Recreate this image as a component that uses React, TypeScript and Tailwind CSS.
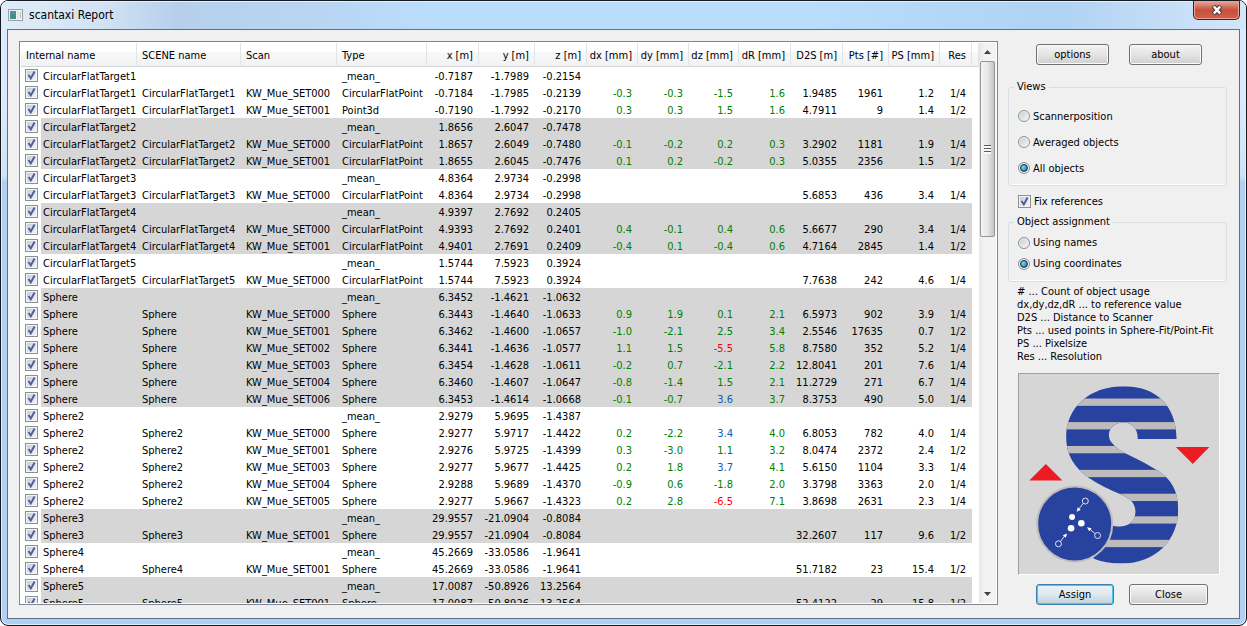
import { useState } from 'react';

type Row = {
    name: string;
    scan?: string;
    type: string;
    pos: [string, string, string];
    diff?: [string, string, string, string];
    info?: [string, string, string, string];
};

const mean = (name: string, x: string, y: string, z: string): Row => ({ name, type: '_mean_', pos: [x, y, z] });

const rows: Row[] = [
    mean('CircularFlatTarget1', '-0.7187', '-1.7989', '-0.2154'),
    { name: 'CircularFlatTarget1', scan: 'KW_Mue_SET000', type: 'CircularFlatPoint', pos: ['-0.7184', '-1.7985', '-0.2139'], diff: ['-0.3', '-0.3', '-1.5', '1.6'], info: ['1.9485', '1961', '1.2', '1/4'] },
    { name: 'CircularFlatTarget1', scan: 'KW_Mue_SET001', type: 'Point3d', pos: ['-0.7190', '-1.7992', '-0.2170'], diff: ['0.3', '0.3', '1.5', '1.6'], info: ['4.7911', '9', '1.4', '1/2'] },
    mean('CircularFlatTarget2', '1.8656', '2.6047', '-0.7478'),
    { name: 'CircularFlatTarget2', scan: 'KW_Mue_SET000', type: 'CircularFlatPoint', pos: ['1.8657', '2.6049', '-0.7480'], diff: ['-0.1', '-0.2', '0.2', '0.3'], info: ['3.2902', '1181', '1.9', '1/4'] },
    { name: 'CircularFlatTarget2', scan: 'KW_Mue_SET001', type: 'CircularFlatPoint', pos: ['1.8655', '2.6045', '-0.7476'], diff: ['0.1', '0.2', '-0.2', '0.3'], info: ['5.0355', '2356', '1.5', '1/2'] },
    mean('CircularFlatTarget3', '4.8364', '2.9734', '-0.2998'),
    { name: 'CircularFlatTarget3', scan: 'KW_Mue_SET000', type: 'CircularFlatPoint', pos: ['4.8364', '2.9734', '-0.2998'], info: ['5.6853', '436', '3.4', '1/4'] },
    mean('CircularFlatTarget4', '4.9397', '2.7692', '0.2405'),
    { name: 'CircularFlatTarget4', scan: 'KW_Mue_SET000', type: 'CircularFlatPoint', pos: ['4.9393', '2.7692', '0.2401'], diff: ['0.4', '-0.1', '0.4', '0.6'], info: ['5.6677', '290', '3.4', '1/4'] },
    { name: 'CircularFlatTarget4', scan: 'KW_Mue_SET001', type: 'CircularFlatPoint', pos: ['4.9401', '2.7691', '0.2409'], diff: ['-0.4', '0.1', '-0.4', '0.6'], info: ['4.7164', '2845', '1.4', '1/2'] },
    mean('CircularFlatTarget5', '1.5744', '7.5923', '0.3924'),
    { name: 'CircularFlatTarget5', scan: 'KW_Mue_SET000', type: 'CircularFlatPoint', pos: ['1.5744', '7.5923', '0.3924'], info: ['7.7638', '242', '4.6', '1/4'] },
    mean('Sphere', '6.3452', '-1.4621', '-1.0632'),
    { name: 'Sphere', scan: 'KW_Mue_SET000', type: 'Sphere', pos: ['6.3443', '-1.4640', '-1.0633'], diff: ['0.9', '1.9', '0.1', '2.1'], info: ['6.5973', '902', '3.9', '1/4'] },
    { name: 'Sphere', scan: 'KW_Mue_SET001', type: 'Sphere', pos: ['6.3462', '-1.4600', '-1.0657'], diff: ['-1.0', '-2.1', '2.5', '3.4'], info: ['2.5546', '17635', '0.7', '1/2'] },
    { name: 'Sphere', scan: 'KW_Mue_SET002', type: 'Sphere', pos: ['6.3441', '-1.4636', '-1.0577'], diff: ['1.1', '1.5', '-5.5', '5.8'], info: ['8.7580', '352', '5.2', '1/4'] },
    { name: 'Sphere', scan: 'KW_Mue_SET003', type: 'Sphere', pos: ['6.3454', '-1.4628', '-1.0611'], diff: ['-0.2', '0.7', '-2.1', '2.2'], info: ['12.8041', '201', '7.6', '1/4'] },
    { name: 'Sphere', scan: 'KW_Mue_SET004', type: 'Sphere', pos: ['6.3460', '-1.4607', '-1.0647'], diff: ['-0.8', '-1.4', '1.5', '2.1'], info: ['11.2729', '271', '6.7', '1/4'] },
    { name: 'Sphere', scan: 'KW_Mue_SET006', type: 'Sphere', pos: ['6.3453', '-1.4614', '-1.0668'], diff: ['-0.1', '-0.7', '3.6', '3.7'], info: ['8.3753', '490', '5.0', '1/4'] },
    mean('Sphere2', '2.9279', '5.9695', '-1.4387'),
    { name: 'Sphere2', scan: 'KW_Mue_SET000', type: 'Sphere', pos: ['2.9277', '5.9717', '-1.4422'], diff: ['0.2', '-2.2', '3.4', '4.0'], info: ['6.8053', '782', '4.0', '1/4'] },
    { name: 'Sphere2', scan: 'KW_Mue_SET001', type: 'Sphere', pos: ['2.9276', '5.9725', '-1.4399'], diff: ['0.3', '-3.0', '1.1', '3.2'], info: ['8.0474', '2372', '2.4', '1/2'] },
    { name: 'Sphere2', scan: 'KW_Mue_SET003', type: 'Sphere', pos: ['2.9277', '5.9677', '-1.4425'], diff: ['0.2', '1.8', '3.7', '4.1'], info: ['5.6150', '1104', '3.3', '1/4'] },
    { name: 'Sphere2', scan: 'KW_Mue_SET004', type: 'Sphere', pos: ['2.9288', '5.9689', '-1.4370'], diff: ['-0.9', '0.6', '-1.8', '2.0'], info: ['3.3798', '3363', '2.0', '1/4'] },
    { name: 'Sphere2', scan: 'KW_Mue_SET005', type: 'Sphere', pos: ['2.9277', '5.9667', '-1.4323'], diff: ['0.2', '2.8', '-6.5', '7.1'], info: ['3.8698', '2631', '2.3', '1/4'] },
    mean('Sphere3', '29.9557', '-21.0904', '-0.8084'),
    { name: 'Sphere3', scan: 'KW_Mue_SET001', type: 'Sphere', pos: ['29.9557', '-21.0904', '-0.8084'], info: ['32.2607', '117', '9.6', '1/2'] },
    mean('Sphere4', '45.2669', '-33.0586', '-1.9641'),
    { name: 'Sphere4', scan: 'KW_Mue_SET001', type: 'Sphere', pos: ['45.2669', '-33.0586', '-1.9641'], info: ['51.7182', '23', '15.4', '1/2'] },
    mean('Sphere5', '17.0087', '-50.8926', '13.2564'),
    { name: 'Sphere5', scan: 'KW_Mue_SET001', type: 'Sphere', pos: ['17.0087', '-50.8926', '13.2564'], info: ['52.4122', '29', '15.8', '1/2'] },
];

// every second object group gets a grey band
const groups = [...new Set(rows.map(r => r.name))];

const numericHeads = ['x [m]', 'y [m]', 'z [m]', 'dx [mm]', 'dy [mm]', 'dz [mm]', 'dR [mm]', 'D2S [m]', 'Pts [#]', 'PS [mm]', 'Res'];

const notes = [
    '# ... Count of object usage',
    'dx,dy,dz,dR ... to reference value',
    'D2S ... Distance to Scanner',
    'Pts ... used points in Sphere-Fit/Point-Fit',
    'PS ... Pixelsize',
    'Res ... Resolution',
];

// dR is informational only, the axis values are flagged
function diffColor(value: string, index: number) {
    const v = Math.abs(parseFloat(value));
    if (index < 3 && v > 5) return 'text-[#ff0000]';
    if (index < 3 && v > 3.2) return 'text-[#0a5cc0]';
    return 'text-[#008000]';
}

function CheckBox({ id, label }: { id?: string; label?: string }) {
    return (
        <span className="relative block w-[13px] h-[13px] flex-none">
            <input
                id={id}
                type="checkbox"
                defaultChecked
                aria-label={label}
                className="peer appearance-none block w-[13px] h-[13px] border border-[#8e8f8f] bg-linear-to-br from-[#c4cad6] to-[#f6f6f6] shadow-[inset_0_0_0_1px_#f4f4f4]"
            />
            <svg viewBox="0 0 13 13" className="absolute inset-0 w-[13px] h-[13px] pointer-events-none hidden peer-checked:block" fill="none" stroke="#4b5fa3" strokeWidth="2">
                <path d="M3.5 6 L5.8 9.4 L9.6 2.6" />
            </svg>
        </span>
    );
}

function Radio({ name, label, checked, onChange, className }: { name: string; label: string; checked: boolean; onChange: () => void; className: string }) {
    return (
        <label className={`flex items-center gap-[3px] ${className}`}>
            <span className="relative block w-3 h-3 flex-none">
                <input
                    type="radio"
                    name={name}
                    checked={checked}
                    onChange={onChange}
                    className="peer appearance-none block w-3 h-3 rounded-full border border-[#8e8f8f] bg-linear-to-br from-[#c6cace] to-[#f8f8f8] shadow-[inset_0_0_0_1px_#f4f4f4]"
                />
                <span className="absolute inset-0.5 rounded-full pointer-events-none hidden peer-checked:block border border-[#12364f] bg-radial-[at_35%_35%] from-[#7fd8f7] to-[#0b5f8e]"></span>
            </span>
            {label}
        </label>
    );
}

function PushButton({ label, width, primary }: { label: string; width: string; primary?: boolean }) {
    return (
        <button
            className={`${width} h-[21px] rounded-[3px] border text-center leading-5 bg-linear-to-b ${
                primary
                    ? 'border-[#3c7fb1] from-[#eaf2f6] via-[#dfe9ee] via-50% to-[#bfd0da] shadow-[inset_0_0_0_1px_#3fc9f5]'
                    : 'border-[#707070] from-[#f3f3f3] via-[#e4e4e4] via-50% to-[#cfcfcf] shadow-[inset_0_0_0_1px_#fafafa]'
            }`}
        >
            {label}
        </button>
    );
}

function Logo() {
    return (
        <svg viewBox="41 26 603 603" className="block w-full" aria-hidden="true">
            <defs>
                <clipPath id="s-shape">
                    <path d="M516 222 C516 122 455 63 357 63 C252 63 183 128 183 216 C183 270 208 308 250 338 C282 360 312 374 345 388 C380 403 392 418 392 442 C392 470 370 486 345 486 C336 486 328 485 320 482 L265 582 C290 592 318 597 350 597 C455 597 521 525 521 435 C521 378 500 342 455 315 C432 300 412 290 392 280 C366 267 345 258 330 243 C317 231 312 222 312 210 C312 187 332 172 355 172 C381 172 400 190 399 222 Z" />
                </clipPath>
            </defs>
            <g clipPath="url(#s-shape)">
                <rect x="170" y="50" width="370" height="560" fill="#28429f" />
                <g fill="#bdbbbb">
                    <rect x="170" y="100" width="370" height="22" />
                    <rect x="170" y="171" width="370" height="22" />
                    <rect x="170" y="243" width="370" height="22" />
                    <rect x="170" y="315" width="370" height="22" />
                    <rect x="170" y="387" width="370" height="22" />
                    <rect x="170" y="455" width="370" height="22" />
                    <rect x="170" y="526" width="370" height="22" />
                </g>
            </g>
            <circle cx="209" cy="478" r="113" fill="#28429f" stroke="#bdbbbb" strokeWidth="6" />
            <g fill="#fff">
                <circle cx="201" cy="457" r="9" />
                <circle cx="229" cy="476" r="10" />
                <circle cx="198" cy="491" r="10" />
                <path d="M215 441 L218 428 L227 435 Z" />
                <path d="M246 488 L260 491 L253 500 Z" />
                <path d="M186 507 L173 512 L182 520 Z" />
            </g>
            <g fill="none" stroke="#fff" strokeWidth="2.5">
                <circle cx="241" cy="409" r="9" />
                <circle cx="278" cy="513" r="9" />
                <circle cx="160" cy="538" r="9" />
                <path d="M235 416 L222 432 M270 507 L256 495 M166 531 L178 515" />
            </g>
            <path d="M122 297 L172 347 H72 Z M514 246 H615 L565 297 Z" fill="#ed1c24" />
        </svg>
    );
}

function ReportTable() {
    return (
        <table className="w-full table-fixed border-separate border-spacing-0 whitespace-nowrap">
            <colgroup>
                <col className="w-5" />
                <col className="w-24" />
                <col className="w-[104px]" />
                <col className="w-24" />
                <col className="w-[90px]" />
                <col className="w-[52px]" />
                <col className="w-14" />
                <col className="w-[52px]" />
                <col className="w-[51px]" />
                <col className="w-[51px]" />
                <col className="w-[50px]" />
                <col className="w-[52px]" />
                <col className="w-[52px]" />
                <col className="w-[46px]" />
                <col className="w-[51px]" />
                <col className="w-8" />
                <col />
            </colgroup>
            <thead>
                <tr className="h-6 [&>th]:font-normal [&>th]:p-0 [&>th]:pt-0.5 [&>th]:border-b [&>th]:border-b-[#d5d5d5] [&>th]:border-r [&>th]:border-r-[#e3e4e6] [&>th]:bg-linear-to-b [&>th]:from-white [&>th]:from-40% [&>th]:via-[#f7f8fa] [&>th]:via-40% [&>th]:to-[#f1f2f4]">
                    <th colSpan={2} className="text-left"><span className="pl-[5px]">Internal name</span></th>
                    <th className="text-left"><span className="pl-[5px]">SCENE name</span></th>
                    <th className="text-left"><span className="pl-[5px]">Scan</span></th>
                    <th className="text-left"><span className="pl-[5px]">Type</span></th>
                    {numericHeads.map(head => (
                        <th key={head} className="text-right"><span className="pr-[5px]">{head}</span></th>
                    ))}
                    <th></th>
                </tr>
            </thead>
            <tbody>
                {rows.map((row, i) => {
                    const shade = groups.indexOf(row.name) % 2 === 1 ? 'bg-[#d6d6d6]' : '';
                    const diff = row.diff ?? ['', '', '', ''];
                    const info = row.info ?? ['', '', '', ''];
                    return (
                        <tr key={i} className="h-[17px]">
                            <td className="pl-1 py-0"><CheckBox label={`${row.name} ${row.scan ?? row.type}`} /></td>
                            <td className={`pl-0.5 pt-0.5 ${shade}`}>{row.name}</td>
                            <td className={`pl-[5px] pt-0.5 ${shade}`}>{row.scan && row.name}</td>
                            <td className={`pl-[5px] pt-0.5 ${shade}`}>{row.scan}</td>
                            <td className={`pl-[5px] pt-0.5 ${shade}`}>{row.type}</td>
                            {row.pos.map((v, k) => (
                                <td key={k} className={`pr-1.5 pt-0.5 text-right ${shade}`}>{v}</td>
                            ))}
                            {diff.map((v, k) => (
                                <td key={k} className={`pr-1.5 pt-0.5 text-right ${shade} ${diffColor(v, k)}`}>{v}</td>
                            ))}
                            {info.map((v, k) => (
                                <td key={k} className={`pr-1.5 pt-0.5 text-right ${shade}`}>{v}</td>
                            ))}
                            <td></td>
                        </tr>
                    );
                })}
            </tbody>
        </table>
    );
}

export default function App() {
    const [view, setView] = useState('All objects');
    const [assignment, setAssignment] = useState('Using coordinates');

    return (
        <div className="h-screen bg-white font-['DejaVu_Sans_Condensed','Open_Sans',sans-serif] text-[11px] leading-[13px] text-black">
            <div className="h-full flex flex-col rounded-lg border border-[#14181f] bg-linear-to-b from-[#dcebfb] from-15% via-[#cfe2f7] via-28% to-[#afd0f3] to-29% shadow-[inset_0_0_0_1px_#dff1ff] px-1.5 pb-1.5 overflow-hidden">
                {/* Title bar */}
                <header className="flex-none h-7 -mx-1.5 pl-[7px] pr-1.5 flex items-start shadow-[inset_0_1px_0_#e4f3ff] bg-[linear-gradient(to_right,#dfecf9,#d3e3f4_8%,#b6d0ec_14%,#b8d5f1_25%,#bbddfc_35%,#bbddfc_65%,#b0d2f3_85%,#d3e6fa)]">
                    <svg viewBox="0 0 16 14" className="w-4 h-3.5 mt-[7px]" aria-hidden="true">
                        <rect x="0.5" y="1.5" width="14" height="11" fill="#f2f2f2" stroke="#9a9fa5" />
                        <rect x="2" y="3" width="6" height="8" fill="#3f8f8a" />
                        <rect x="2" y="3" width="6" height="3" fill="#5a86b8" />
                        <rect x="9" y="3" width="2" height="8" fill="#dfe3e6" />
                        <rect x="12" y="4" width="1" height="6" fill="#a9c9a9" />
                    </svg>
                    <h1 className="ml-[5px] mt-1.5 text-xs leading-4">scantaxi Report</h1>
                    <button aria-label="Close window" className="ml-auto w-[47px] h-[19px] flex items-center justify-center rounded-b-[5px] border border-t-0 border-[#54191a] bg-linear-to-b from-[#e5a99c] via-[#c4503c] via-50% to-[#d4604a] shadow-[inset_0_0_0_1px_#eba394]">
                        <svg viewBox="0 0 12 10" className="w-3 h-2.5">
                            <path d="M2.5 1 L9.5 9 M9.5 1 L2.5 9" stroke="#4c3b44" strokeWidth="4.6" />
                            <path d="M2.9 1.5 L9.1 8.5 M9.1 1.5 L2.9 8.5" stroke="#fff" strokeWidth="2.6" />
                        </svg>
                    </button>
                </header>

                <main className="flex-1 min-h-0 flex border border-[#5f7184] bg-[#f0f0f0]">
                    {/* Object list */}
                    <section className="flex-1 min-w-0 ml-[11px] mt-[11px] mb-[13px] flex border border-[#828790] bg-white p-px">
                        <div className="flex-1 min-w-0 overflow-hidden">
                            <ReportTable />
                        </div>
                        <div className="w-[17px] flex-none flex flex-col bg-linear-to-r from-[#e6e6e6] to-[#f2f2f2] to-30%">
                            <div className="h-[18px] flex items-center justify-center">
                                <svg viewBox="0 0 7 4" className="w-[7px] h-1"><path d="M3.5 0 L7 4 H0 Z" fill="#404040" /></svg>
                            </div>
                            <div className="h-[176px] mx-px flex items-center justify-center rounded-xs border border-[#979797] bg-linear-to-r from-[#f5f5f5] via-[#e6e6e7] via-50% to-[#c4c4c8]">
                                <div className="w-[7px] h-[9px] bg-[repeating-linear-gradient(to_bottom,#5a5a5a_0_1px,#f8f8f8_1px_3px)]"></div>
                            </div>
                            <div className="h-[18px] mt-auto flex items-center justify-center">
                                <svg viewBox="0 0 7 4" className="w-[7px] h-1"><path d="M0 0 H7 L3.5 4 Z" fill="#404040" /></svg>
                            </div>
                        </div>
                    </section>

                    {/* Settings */}
                    <aside className="w-[241px] flex-none pl-2.5 pr-3 pt-3.5">
                        <div className="flex gap-5 pl-7">
                            <PushButton label="options" width="w-[73px]" />
                            <PushButton label="about" width="w-[73px]" />
                        </div>

                        <fieldset className="mt-[15px] border border-[#d5dfe5] rounded-[3px] shadow-[inset_0_-1px_0_#fff] pl-[9px] pt-[9px] pb-1">
                            <legend className="-ml-1 px-[3px] leading-[14px]">Views</legend>
                            {['Scannerposition', 'Averaged objects', 'All objects'].map(item => (
                                <Radio key={item} name="view" label={item} checked={view === item} onChange={() => setView(item)} className="h-[26px]" />
                            ))}
                        </fieldset>

                        <div className="mt-2 pl-2.5 h-3.5 flex items-center gap-[3px]">
                            <CheckBox id="fix" />
                            <label htmlFor="fix">Fix references</label>
                        </div>

                        <fieldset className="mt-[7px] border border-[#d5dfe5] rounded-[3px] shadow-[inset_0_-1px_0_#fff] pl-[9px] pt-[3px] pb-[7px]">
                            <legend className="-ml-1 px-[3px] leading-[14px]">Object assignment</legend>
                            {['Using names', 'Using coordinates'].map(item => (
                                <Radio key={item} name="assignment" label={item} checked={assignment === item} onChange={() => setAssignment(item)} className="h-[21px]" />
                            ))}
                        </fieldset>

                        <div className="mt-[3px] pl-[9px] whitespace-nowrap">
                            {notes.map(note => <p key={note}>{note}</p>)}
                        </div>

                        <div className="mt-2.5 ml-2.5 w-[202px] border border-t-[#a0a0a0] border-l-[#a0a0a0] border-r-white border-b-white bg-[#d6d6d6]">
                            <Logo />
                        </div>

                        <div className="mt-[9px] pl-7 flex gap-[15px]">
                            <PushButton label="Assign" width="w-[78px]" primary />
                            <PushButton label="Close" width="w-[79px]" />
                        </div>
                    </aside>
                </main>
            </div>
        </div>
    );
}
